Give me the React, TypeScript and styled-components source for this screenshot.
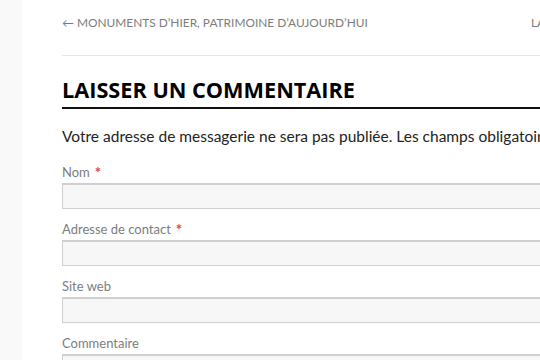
import React from 'react'
import styled, { createGlobalStyle } from 'styled-components'

const GlobalStyle = createGlobalStyle`
  html, body {
    margin: 0;
    padding: 0;
    background: #ffffff;
    overflow: hidden;
  }
  body {
    font-family: 'Lato', 'Noto Sans', sans-serif;
  }
`

const Page = styled.div`
  display: flex;
  width: 540px;
  height: 360px;
  overflow: hidden;
`

const Sidebar = styled.div`
  flex: 0 0 22px;
  background: #f9f9f9;
`

const Main = styled.main`
  flex: 0 0 760px;
  padding-left: 40px;
  padding-top: 15px;
`

const PostNav = styled.nav`
  display: grid;
  grid-template-columns: 469px auto;
  font-size: 11.9px;
  color: #7c7c7c;
  text-transform: uppercase;
  padding-bottom: 24px;
  border-bottom: 1px solid #e6e6e6;
  line-height: 16px;
`

const NavLink = styled.a`
  color: inherit;
  text-decoration: none;
  white-space: nowrap;
`

const ReplyTitle = styled.h3`
  margin: 20px 0 0;
  font-family: 'Open Sans', sans-serif;
  font-weight: 700;
  font-size: 21.7px;
  line-height: 28px;
  color: #000;
  text-transform: uppercase;
  padding-bottom: 3px;
  border-bottom: 2px solid #111;
`

const Notes = styled.p`
  margin: 16px 0 0;
  font-size: 15.5px;
  line-height: 22px;
  color: #222;
  white-space: nowrap;
`

const Form = styled.form`
  display: flex;
  flex-direction: column;
  gap: 13px;
  margin-top: 18px;
`

const Field = styled.div`
  display: flex;
  flex-direction: column;
  gap: 4px;
`

const Label = styled.label`
  font-size: 13px;
  line-height: 14px;
  color: #7d7d7d;
`

const Required = styled.span`
  color: #e8412c;
  margin-left: 5px;
  font-size: 15px;
  font-weight: 700;
  vertical-align: -1px;
`

const Input = styled.input<{ $tall?: boolean }>`
  box-sizing: border-box;
  height: ${p => (p.$tall ? '120px' : '26px')};
  width: 100%;
  margin: 0;
  border: 1px solid #cfcfcf;
  border-top: 2px solid #cfcfcf;
  background: #f7f7f7;
  font: inherit;
`

const fields = [
  { label: 'Nom', required: true },
  { label: 'Adresse de contact', required: true },
  { label: 'Site web', required: false },
  { label: 'Commentaire', required: false, tall: true },
]

const App = () => {
  return <>
    <GlobalStyle />
    <Page>
      <Sidebar />
      <Main>
        <PostNav>
          <NavLink href="#">← Monuments d’hier, patrimoine d’aujourd’hui</NavLink>
          <NavLink href="#">La suite →</NavLink>
        </PostNav>

        <ReplyTitle>Laisser un commentaire</ReplyTitle>

        <Notes>
          Votre adresse de messagerie ne sera pas publiée. Les champs obligatoires sont indiqués avec *
        </Notes>

        <Form>
          {fields.map(f => (
            <Field key={f.label}>
              <Label>
                {f.label}
                {f.required && <Required>*</Required>}
              </Label>
              <Input $tall={f.tall} />
            </Field>
          ))}
        </Form>
      </Main>
    </Page>
  </>
}

export default App
